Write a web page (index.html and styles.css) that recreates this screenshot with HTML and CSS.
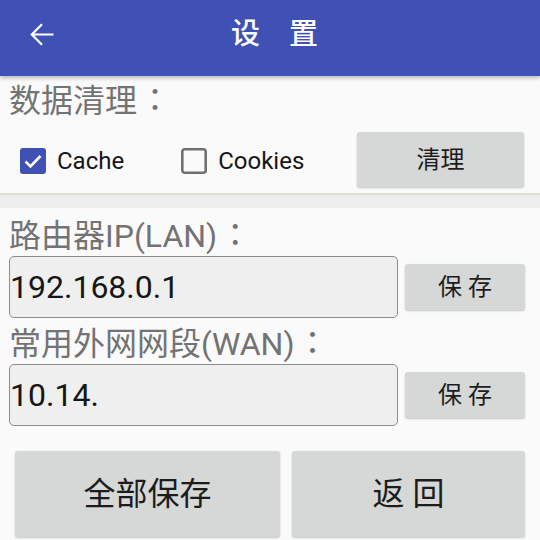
FILE: index.html
```html
<!DOCTYPE html>
<html lang="zh-CN">
<head>
<meta charset="utf-8">
<title>设置</title>
<link rel="stylesheet" href="styles.css">
</head>
<body>
<header class="appbar">
  <svg class="back" width="24" height="24" viewBox="0 0 24 24" aria-hidden="true">
    <path d="M23.5 11.5H1.8M12 1.2L1.8 11.5L12 21.8" fill="none" stroke="#fff" stroke-width="2.2"/>
  </svg>
  <h1 class="title">设　置</h1>
</header>

<section class="clean">
  <div class="label">数据清理<span class="colon">：</span></div>
  <div class="check-row">
    <label class="check check-first">
      <svg width="26" height="26" viewBox="0 0 26 26" aria-hidden="true">
        <rect x="0" y="0" width="26" height="26" rx="3" fill="#3f51b5"/>
        <path d="M5.5 13.5L10.5 18.5L20.5 8" fill="none" stroke="#fff" stroke-width="2.6"/>
      </svg>
      <span>Cache</span>
    </label>
    <label class="check check-second">
      <svg width="26" height="26" viewBox="0 0 26 26" aria-hidden="true">
        <rect x="1.3" y="1.3" width="23.4" height="23.4" rx="2.5" fill="none" stroke="#707070" stroke-width="2.6"/>
      </svg>
      <span>Cookies</span>
    </label>
    <button class="btn btn-clean">清理</button>
  </div>
</section>

<div class="divider"></div>

<section class="net">
  <div class="label label-lan">路由器IP(LAN)<span class="colon">：</span></div>
  <div class="field-row">
    <div class="input">192.168.0.1</div>
    <button class="btn btn-save">保 存</button>
  </div>
  <div class="label label-wan">常用外网网段(WAN)<span class="colon">：</span></div>
  <div class="field-row">
    <div class="input">10.14.</div>
    <button class="btn btn-save">保 存</button>
  </div>
  <div class="bottom">
    <button class="btn btn-big">全部保存</button>
    <button class="btn btn-big">返 回</button>
  </div>
</section>
</body>
</html>
```

FILE: styles.css
```css
* { box-sizing: border-box; }

html, body {
  margin: 0;
  padding: 0;
  background: #fafafa;
}

body {
  font-family: Roboto, "Noto Sans CJK SC", sans-serif;
  width: 540px;
  height: 540px;
  overflow: hidden;
}

.appbar {
  display: flex;
  align-items: center;
  height: 76px;
  padding: 0 0 7px 30px;
  background: #3f51b5;
  box-shadow: 0 2px 4px rgba(0, 0, 0, 0.28);
  position: relative;
  z-index: 1;
}

.back {
  display: block;
  flex: none;
}

.title {
  margin: 0 0 0 177px;
  font-size: 29px;
  line-height: 1;
  font-weight: 500;
  color: #ffffff;
}

.clean {
  padding: 9px 16px 6px 9px;
}

.label {
  height: 32px;
  font-size: 32px;
  line-height: 32px;
  color: #737373;
  white-space: nowrap;
}

.colon {
  padding-left: 10px;
  vertical-align: 3px;
  line-height: 0;
}

.check-row {
  display: flex;
  align-items: center;
  height: 55px;
  margin-top: 15px;
}

.check {
  display: flex;
  align-items: center;
  gap: 11px;
  font-size: 24px;
  color: #161616;
  margin-top: 3px;
}

.check svg { display: block; flex: none; }

.check-first { margin-left: 11px; }
.check-second { margin-left: 57px; }

.btn {
  border: none;
  margin: 0;
  padding: 0;
  background: #d6d7d7;
  border-radius: 3px;
  box-shadow: 0 1px 2px rgba(0, 0, 0, 0.22);
  font-family: Roboto, "Noto Sans CJK SC", sans-serif;
  color: #1c1c1c;
  line-height: 1;
}

.btn-clean {
  margin-left: auto;
  width: 167px;
  height: 55px;
  font-size: 24px;
}

.divider {
  height: 15px;
  border-top: 2px solid #dfe0d5;
  background: #eeeeee;
}

.net {
  padding: 0 15px 0 9px;
}

.label-lan { margin-top: 12px; }
.label-wan { margin-top: 10px; }

.field-row {
  display: flex;
  align-items: center;
  gap: 7px;
  margin-top: 4px;
}

.input {
  width: 389px;
  height: 62px;
  display: flex;
  align-items: center;
  padding-left: 0;
  background: #efefef;
  border: 1px solid #8c8c8c;
  border-radius: 5px;
  font-size: 32px;
  color: #161616;
}

.btn-save {
  width: 120px;
  height: 46px;
  font-size: 24px;
}

.bottom {
  display: grid;
  grid-template-columns: 265px 233px;
  gap: 12px;
  margin: 25px 0 0 6px;
}

.btn-big {
  height: 86px;
  font-size: 32px;
}
```
